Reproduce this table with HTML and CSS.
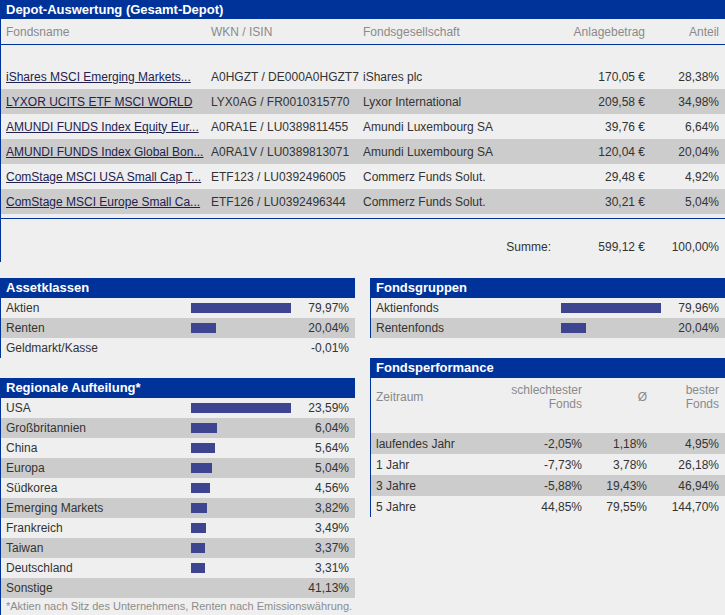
FILE: index.html
```html
<!DOCTYPE html>
<html lang="de">
<head>
<meta charset="utf-8">
<title>Depot-Auswertung</title>
<link rel="stylesheet" href="styles.css">
</head>
<body>
<div class="page">
  <section class="depot">
    <h1 class="title">Depot-Auswertung (Gesamt-Depot)</h1>
    <div class="depot-body">
      <div class="drow dhead">
        <span>Fondsname</span><span>WKN / ISIN</span><span>Fondsgesellschaft</span><span class="r">Anlagebetrag</span><span class="r">Anteil</span>
      </div>
      <div class="drows">
        <div class="drow"><a href="#">iShares MSCI Emerging Markets...</a><span>A0HGZT / DE000A0HGZT7</span><span>iShares plc</span><span class="r">170,05 €</span><span class="r">28,38%</span></div>
        <div class="drow alt"><a href="#">LYXOR UCITS ETF MSCI WORLD</a><span>LYX0AG / FR0010315770</span><span>Lyxor International</span><span class="r">209,58 €</span><span class="r">34,98%</span></div>
        <div class="drow"><a href="#">AMUNDI FUNDS Index Equity Eur...</a><span>A0RA1E / LU0389811455</span><span>Amundi Luxembourg SA</span><span class="r">39,76 €</span><span class="r">6,64%</span></div>
        <div class="drow alt"><a href="#">AMUNDI FUNDS Index Global Bon...</a><span>A0RA1V / LU0389813071</span><span>Amundi Luxembourg SA</span><span class="r">120,04 €</span><span class="r">20,04%</span></div>
        <div class="drow"><a href="#">ComStage MSCI USA Small Cap T...</a><span>ETF123 / LU0392496005</span><span>Commerz Funds Solut.</span><span class="r">29,48 €</span><span class="r">4,92%</span></div>
        <div class="drow alt"><a href="#">ComStage MSCI Europe Small Ca...</a><span>ETF126 / LU0392496344</span><span>Commerz Funds Solut.</span><span class="r">30,21 €</span><span class="r">5,04%</span></div>
      </div>
      <div class="dsum">
        <span></span><span></span><span class="r sumlabel">Summe:</span><span class="r">599,12 €</span><span class="r">100,00%</span>
      </div>
    </div>
  </section>

  <div class="cols">
    <div class="col">
      <section class="box">
        <h2 class="box-title">Assetklassen</h2>
        <div class="box-body">
          <div class="brow"><span>Aktien</span><span class="bar" style="width:100px"></span><span class="r">79,97%</span></div>
          <div class="brow alt"><span>Renten</span><span class="bar" style="width:25px"></span><span class="r">20,04%</span></div>
          <div class="brow"><span>Geldmarkt/Kasse</span><span></span><span class="r">-0,01%</span></div>
        </div>
      </section>
      <section class="box">
        <h2 class="box-title">Regionale Aufteilung*</h2>
        <div class="box-body">
          <div class="brow"><span>USA</span><span class="bar" style="width:100px"></span><span class="r">23,59%</span></div>
          <div class="brow alt"><span>Großbritannien</span><span class="bar" style="width:26px"></span><span class="r">6,04%</span></div>
          <div class="brow"><span>China</span><span class="bar" style="width:24px"></span><span class="r">5,64%</span></div>
          <div class="brow alt"><span>Europa</span><span class="bar" style="width:21px"></span><span class="r">5,04%</span></div>
          <div class="brow"><span>Südkorea</span><span class="bar" style="width:19px"></span><span class="r">4,56%</span></div>
          <div class="brow alt"><span>Emerging Markets</span><span class="bar" style="width:16px"></span><span class="r">3,82%</span></div>
          <div class="brow"><span>Frankreich</span><span class="bar" style="width:15px"></span><span class="r">3,49%</span></div>
          <div class="brow alt"><span>Taiwan</span><span class="bar" style="width:14px"></span><span class="r">3,37%</span></div>
          <div class="brow"><span>Deutschland</span><span class="bar" style="width:14px"></span><span class="r">3,31%</span></div>
          <div class="brow alt"><span>Sonstige</span><span></span><span class="r">41,13%</span></div>
          <div class="note">*Aktien nach Sitz des Unternehmens, Renten nach Emissionswährung.</div>
        </div>
      </section>
    </div>

    <div class="col">
      <section class="box">
        <h2 class="box-title">Fondsgruppen</h2>
        <div class="box-body">
          <div class="brow"><span>Aktienfonds</span><span class="bar" style="width:100px"></span><span class="r">79,96%</span></div>
          <div class="brow alt"><span>Rentenfonds</span><span class="bar" style="width:25px"></span><span class="r">20,04%</span></div>
        </div>
      </section>
      <section class="box">
        <h2 class="box-title">Fondsperformance</h2>
        <div class="box-body perf">
          <div class="prow phead">
            <span class="mid">Zeitraum</span>
            <span class="r">schlechtester<br>Fonds</span>
            <span class="r mid">Ø</span>
            <span class="r">bester<br>Fonds</span>
          </div>
          <div class="prows">
            <div class="prow alt"><span>laufendes Jahr</span><span class="r">-2,05%</span><span class="r">1,18%</span><span class="r">4,95%</span></div>
            <div class="prow"><span>1 Jahr</span><span class="r">-7,73%</span><span class="r">3,78%</span><span class="r">26,18%</span></div>
            <div class="prow alt"><span>3 Jahre</span><span class="r">-5,88%</span><span class="r">19,43%</span><span class="r">46,94%</span></div>
            <div class="prow"><span>5 Jahre</span><span class="r">44,85%</span><span class="r">79,55%</span><span class="r">144,70%</span></div>
          </div>
        </div>
      </section>
    </div>
  </div>
</div>
</body>
</html>
```
FILE: styles.css
```css
html, body {
  margin: 0;
  padding: 0;
}
body {
  background: #efefef;
  font-family: "Liberation Sans", Arial, sans-serif;
  font-size: 12px;
  color: #333333;
}
.page {
  width: 725px;
  height: 615px;
  overflow: hidden;
}
.title,
.box-title {
  margin: 0;
  background: #003399;
  color: #ffffff;
  font-size: 13px;
  font-weight: bold;
  padding-left: 6px;
  white-space: nowrap;
}
.title {
  height: 19px;
  line-height: 19px;
}
.box-title {
  height: 20px;
  line-height: 20px;
}
.r {
  text-align: right;
}
.alt {
  background: #cccccc;
}

/* Depot table */
.depot-body {
  border-left: 1px solid #003399;
}
.drow,
.dsum {
  display: grid;
  grid-template-columns: 205px 152px 192px 90px 74px;
  padding: 0 6px 0 5px;
  align-items: center;
  white-space: nowrap;
}
.drow {
  height: 25px;
}
.dhead {
  color: #8a8a8a;
  border-bottom: 1px solid #003399;
}
.drows {
  margin-top: 19px;
}
.drow a {
  color: #22224f;
  text-decoration: underline;
}
.dsum {
  margin-top: 4px;
  border-top: 1px solid #003399;
  padding-top: 21px;
  padding-bottom: 8px;
  line-height: 14px;
}
.sumlabel {
  padding-right: 4px;
}

/* Columns */
.cols {
  display: flex;
  gap: 15px;
  margin-top: 16px;
}
.col {
  width: 355px;
  display: flex;
  flex-direction: column;
  gap: 20px;
}
.box-body {
  border-left: 1px solid #003399;
}
.brow {
  display: grid;
  grid-template-columns: 185px 100px 1fr;
  height: 20px;
  align-items: center;
  padding: 0 6px 0 5px;
  white-space: nowrap;
}
.bar {
  display: block;
  height: 10px;
  background: #3d4590;
}
.note {
  height: 17px;
  line-height: 17px;
  font-size: 11px;
  color: #8c8c8c;
  padding-left: 5px;
  white-space: nowrap;
}

/* Performance */
.prow {
  display: grid;
  grid-template-columns: 126px 80px 65px 1fr;
  height: 21px;
  align-items: center;
  padding: 0 6px 0 5px;
  white-space: nowrap;
}
.phead {
  height: 36px;
  box-sizing: border-box;
  padding-top: 5px;
  align-items: start;
  line-height: 14px;
  color: #8a8a8a;
}
.phead .mid {
  align-self: center;
  margin-top: -3px;
}
.prows {
  margin-top: 19px;
}
```
